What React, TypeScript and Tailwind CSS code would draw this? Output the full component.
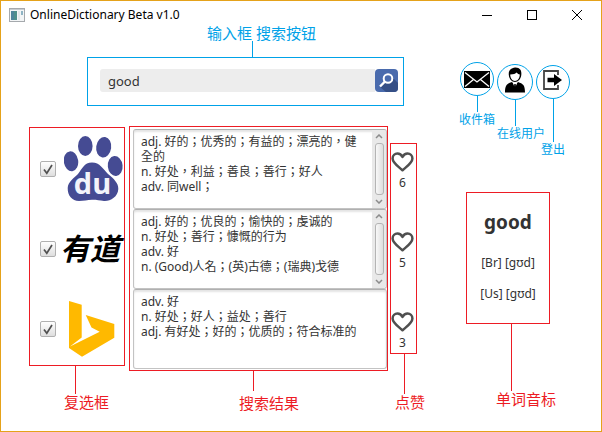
import type { ReactNode } from "react";

const results = [
  {
    id: "baidu",
    name: "百度",
    likes: 6,
    scroll: true,
    text: "adj. 好的；优秀的；有益的；漂亮的，健全的\nn. 好处，利益；善良；善行；好人\nadv. 同well；",
  },
  {
    id: "youdao",
    name: "有道",
    likes: 5,
    scroll: true,
    text: "adj. 好的；优良的；愉快的；虔诚的\nn. 好处；善行；慷慨的行为\nadv. 好\nn. (Good)人名；(英)古德；(瑞典)戈德",
  },
  {
    id: "bing",
    name: "必应",
    likes: 3,
    scroll: false,
    text: "adv. 好\nn. 好处；好人；益处；善行\nadj. 有好处；好的；优质的；符合标准的",
  },
];

function BaiduLogo() {
  return (
    <svg width="60" height="66" viewBox="0 0 60 66" aria-hidden="true">
      <g fill="#454b93">
        <ellipse cx="7" cy="25.3" rx="7.2" ry="10" transform="rotate(-8 7 25.3)" />
        <ellipse cx="21.3" cy="10" rx="7.3" ry="10" />
        <ellipse cx="39.7" cy="11.3" rx="7.5" ry="10.3" transform="rotate(8 39.7 11.3)" />
        <ellipse cx="51.2" cy="30" rx="7.4" ry="10" transform="rotate(-6 51.2 30)" />
        <path d="M28 26.5C36 26.5 39 33 44 38C50 43 54.5 47 54.3 53C54 61 46 65.5 40 65C35 64.3 32 63.5 28 63.7C23 63.8 20 65 15 65C8 64.5 3.5 60 3.7 52C4 46 10 42 14 38C18 33 20 26.5 28 26.5Z" />
      </g>
      <text x="28.5" y="58" textAnchor="middle" className="fill-[#f3f3fa] font-['Open_Sans',sans-serif] text-[29px] font-bold">
        du
      </text>
    </svg>
  );
}

function BingLogo() {
  return (
    <svg width="46" height="56" viewBox="0 0 46 56" aria-hidden="true">
      <path d="M0 0L12.7 3.7V36.5L1 45.5L30.7 30.7L22.5 26.5L16.7 14L45.3 23V36.7L13 55.7L0 47Z" fill="#ffb900" />
    </svg>
  );
}

function Logo({ id }: { id: string }) {
  if (id === "baidu") return <BaiduLogo />;
  if (id === "bing") return <span className="pl-[5px]"><BingLogo /></span>;
  return <span className="-ml-1 text-[30px] leading-8 font-bold whitespace-nowrap text-black italic">有道</span>;
}

function ScrollBar() {
  return (
    <div className="flex w-3.5 shrink-0 flex-col items-center justify-between rounded-r-[3px] bg-[#e9e9e9] py-1" aria-hidden="true">
      <svg width="8" height="5" viewBox="0 0 8 5" fill="none" stroke="#8c8c8c" strokeWidth="1.5"><path d="M1 4L4 1L7 4" /></svg>
      <div className="h-[52px] w-[9px] rounded-[3px] border border-[#b4b4b4] bg-linear-to-r from-[#f8f8f8] to-[#dedede]" />
      <svg width="8" height="5" viewBox="0 0 8 5" fill="none" stroke="#8c8c8c" strokeWidth="1.5"><path d="M1 1L4 4L7 1" /></svg>
    </div>
  );
}

function IconCallout({ label, size, line, top, align, children }: { label: string; size: string; line: string; top: string; align: string; children: ReactNode }) {
  return (
    <div className={`flex flex-col items-center text-[#00a2e8] ${size} ${top}`}>
      <button type="button" aria-label={label} className={`grid shrink-0 place-items-center rounded-full border border-[#00a2e8] text-black ${size} aspect-square`}>
        {children}
      </button>
      <div className={`w-px shrink-0 bg-[#00a2e8] ${line}`} />
      <span className={`text-xs leading-4 whitespace-nowrap ${align}`}>{label}</span>
    </div>
  );
}

export default function App() {
  return (
    <div className="flex min-h-screen flex-col border border-[#e5a21a] bg-white font-['Noto_Sans','Noto_Sans_CJK_SC',sans-serif] text-[#333]">
      <header className="flex h-6 items-center pt-1 pl-2 text-black">
        <svg width="16" height="14" viewBox="0 0 16 14" className="mr-[5px]" aria-hidden="true">
          <rect x="0.5" y="0.5" width="15" height="13" fill="#f3f5f6" stroke="#a5a9ad" />
          <path d="M1 1.5H15" stroke="#c7ccd2" />
          <rect x="2" y="3" width="6" height="9" fill="#4f8f8b" />
          <path d="M2 3h3v9H2z" fill="#507ea5" opacity=".6" />
          <path d="M10 3v9" stroke="#d5dadd" />
          <rect x="12" y="3" width="2" height="4" fill="#8fb4c4" />
        </svg>
        <h1 className="flex-1 text-xs leading-4">OnlineDictionary Beta v1.0</h1>
        <div className="flex gap-[35px] pr-[19px]">
          <button type="button" aria-label="最小化"><svg width="10" height="10" stroke="black"><path d="M0 5.5H10" /></svg></button>
          <button type="button" aria-label="最大化"><svg width="10" height="10" fill="none" stroke="black"><rect x="0.5" y="0.5" width="9" height="9" /></svg></button>
          <button type="button" aria-label="关闭"><svg width="10" height="10" stroke="black"><path d="M0 0L10 10M10 0L0 10" /></svg></button>
        </div>
      </header>

      <main className="flex flex-1">
        <div className="min-w-0 flex-1 pl-7">
          <form className="mr-[13px] ml-[58px] flex flex-col" onSubmit={(e) => e.preventDefault()}>
            <label htmlFor="query" className="ml-[120px] text-[15px] leading-4 text-[#00a2e8]">输入框 搜索按钮</label>
            <div className="ml-[165px] h-4 w-px bg-[#00a2e8]" />
            <div className="flex border border-[#00a2e8] pt-[11px] pr-[5px] pb-[13px] pl-3">
              <input id="query" defaultValue="good" className="h-[23px] min-w-0 flex-1 rounded-l-[3px] bg-[#ededed] px-2 text-[13px] outline-none" />
              <button type="submit" aria-label="搜索" className="size-[23px] overflow-hidden rounded-[4px] bg-[#4a6bad]">
                <svg width="23" height="23" viewBox="0 0 23 23" fill="none">
                  <path d="M16 7L23 14V23H11L5 18Z" fill="#354f86" />
                  <circle cx="13" cy="9.5" r="4.3" fill="#4a6bad" stroke="white" strokeWidth="2" />
                  <path d="M10 12.5L5 17.5" stroke="white" strokeWidth="2.4" />
                </svg>
              </button>
            </div>
          </form>

          <div className="mt-5 flex items-start">
            <div className="mt-px mr-1 w-24 shrink-0 text-[#ed1c24]">
              <div className="flex flex-col gap-3 border border-[#ed1c24] pt-[7px] pb-0.5 pl-2.5">
                {results.map((r) => (
                  <label key={r.id} className="flex h-[68px] items-center gap-2">
                    <span className="grid shrink-0 place-items-center">
                      <input type="checkbox" defaultChecked aria-label={r.name} className="peer size-4 appearance-none rounded-[2px] border border-[#b0b0b0] bg-linear-to-b from-white to-[#dedede] [grid-area:1/1]" />
                      <svg width="10" height="11" viewBox="0 0 10 11" fill="none" stroke="#505050" strokeWidth="1.7" className="pointer-events-none invisible [grid-area:1/1] peer-checked:visible"><path d="M1 5.5L3.8 9.3L9 1" /></svg>
                    </span>
                    <Logo id={r.id} />
                  </label>
                ))}
              </div>
              <div className="ml-[46px] h-7 w-px bg-[#ed1c24]" />
              <p className="ml-[35px] text-[15px] leading-4">复选框</p>
            </div>

            <div className="mr-0.5 min-w-0 flex-1 text-[#ed1c24]">
              <div className="border border-[#ed1c24] pt-0.5 pb-px pl-[3px]">
                {results.map((r) => (
                  <div key={r.id} className="flex h-20 rounded-[3px] border border-[#c3c3c3] border-t-[#b0b0b0] shadow-[inset_0_2px_2px_#e4e4e4]">
                    <textarea readOnly aria-label={r.name} value={r.text} className="min-w-0 flex-1 resize-none overflow-hidden px-[7px] pt-1 font-['Noto_Sans','Noto_Sans_CJK_TC',sans-serif] text-xs leading-[15px] text-[#333] outline-none" />
                    {r.scroll && <ScrollBar />}
                  </div>
                ))}
              </div>
              <div className="ml-[124px] h-5 w-px bg-[#ed1c24]" />
              <p className="mt-1 ml-[110px] text-[15px] leading-4">搜索结果</p>
            </div>

            <div className="mt-[17px] w-[27px] shrink-0 text-[#ed1c24]">
              <div className="flex flex-col items-center gap-[42px] border border-[#ed1c24] pt-2 pr-0.5 pb-[3px]">
                {results.map((r) => (
                  <button key={r.id} type="button" aria-label={`点赞 ${r.likes}`} className="flex flex-col items-center gap-1 text-[#333]">
                    <svg width="23" height="20" viewBox="0 0 23 20" fill="none" stroke="#505050" strokeWidth="2.5" strokeLinejoin="round"><path d="M11.5 18.3C8 15 1.6 11.2 1.6 6.5C1.6 3.5 4 1.6 6.4 1.6C8.8 1.6 10.5 3 11.5 5C12.5 3 14.2 1.6 16.6 1.6C19 1.6 21.4 3.5 21.4 6.5C21.4 11.2 15 15 11.5 18.3Z" /></svg>
                    <span className="text-xs leading-[14px]">{r.likes}</span>
                  </button>
                ))}
              </div>
              <div className="ml-3.5 h-10 w-px bg-[#ed1c24]" />
              <p className="ml-[5px] text-[15px] leading-4 whitespace-nowrap">点赞</p>
            </div>
          </div>
        </div>

        <aside className="ml-[43px] w-[141px] shrink-0 pt-[37px]">
          <nav className="flex h-[95px] items-start gap-[3px]">
            <IconCallout label="收件箱" size="w-[34px]" line="h-4" top="mt-0" align="">
              <svg width="26" height="17" viewBox="0 0 26 17" fill="none"><rect width="26" height="17" fill="black" /><path d="M1 1.5L13 11L25 1.5M1 15.5L9.5 8.5M25 15.5L16.5 8.5" stroke="white" strokeWidth="1.3" /></svg>
            </IconCallout>
            <IconCallout label="在线用户" size="w-9" line="h-[26px]" top="mt-0.5" align="self-start">
              <svg width="20" height="26" viewBox="0 0 20 26" className="mb-1">
                <path d="M0 25.5C0 18 2 16.8 7 15L10 18.5L13 15C18 16.8 20 18 20 25.5Z" />
                <path d="M3.8 8C3.3 2.5 6.5 1 10 .4C14.5 .1 17 3 16.3 8C15.8 12 13.2 15 10 15C6.8 15 4.2 12 3.8 8Z" />
                <path d="M5.2 7.4C8.5 7.2 10.5 6.6 11.7 5.4C12.5 6.6 13.8 7.2 14.8 7.4C14.8 11 12.7 13.9 10 13.9C7.3 13.9 5.2 11 5.2 7.4Z" fill="white" />
                <path d="M7.6 15.6L10 21L12.4 15.6L10 17Z" fill="white" />
                <path d="M9.3 17H10.7L11.2 22L10 24L8.8 22Z" />
              </svg>
            </IconCallout>
            <IconCallout label="登出" size="w-[34px]" line="h-[43px]" top="mt-[3px]" align="">
              <svg width="20" height="20" viewBox="0 0 20 20" fill="none" className="mb-1">
                <path d="M15 5V1H1V19H15V15" stroke="#444" strokeWidth="1.8" />
                <path d="M4.5 7.8H11V4L19 10L11 16V12.2H4.5Z" fill="black" />
              </svg>
            </IconCallout>
          </nav>

          <section className="mt-[35px] ml-1.5 text-[#ed1c24]">
            <div className="flex h-[132px] w-[84px] flex-col items-center border border-[#ed1c24] pt-4 text-[#333]">
              <h2 className="text-[19px] leading-[26px] font-bold">good</h2>
              <p className="mt-5 text-xs leading-4">[Br] [gʊd]</p>
              <p className="mt-[15px] text-xs leading-4">[Us] [gʊd]</p>
            </div>
            <div className="ml-[45px] h-[67px] w-px bg-[#ed1c24]" />
            <p className="ml-[30px] text-[15px] leading-4">单词音标</p>
          </section>
        </aside>
      </main>
    </div>
  );
}
